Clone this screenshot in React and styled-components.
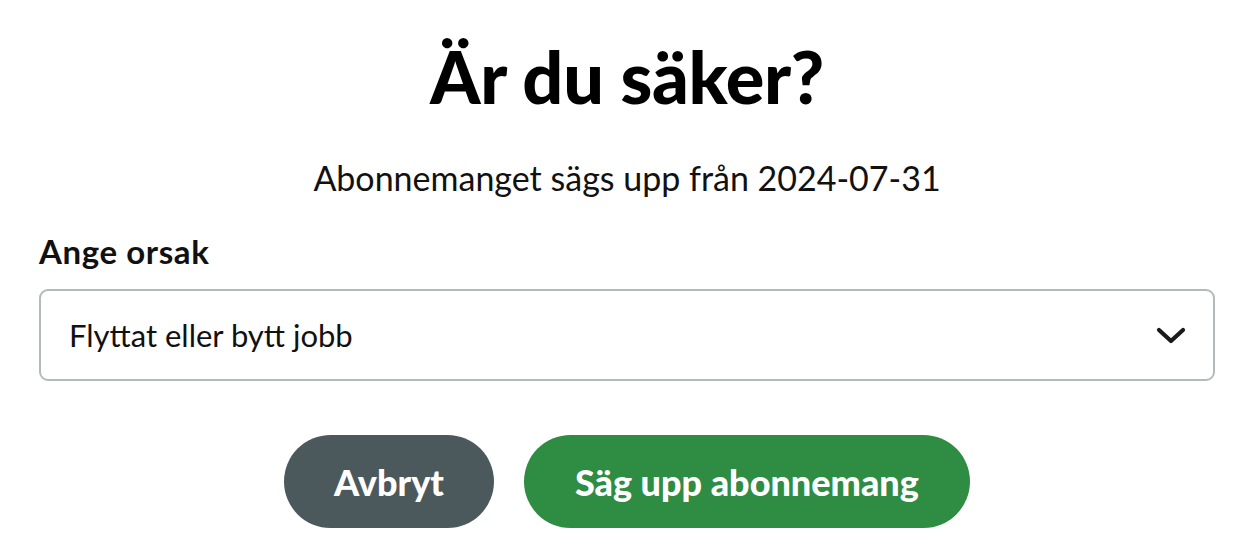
import React from 'react';
import styled, { createGlobalStyle } from 'styled-components';

const GlobalStyle = createGlobalStyle`
    html, body {
        margin: 0;
        padding: 0;
        background: #ffffff;
    }
    body {
        font-family: 'Lato', 'Liberation Sans', sans-serif;
        color: #111111;
    }
`;

const Dialog = styled.div`
    box-sizing: border-box;
    width: 1244px;
    padding: 36px 29px 0 39px;
    display: flex;
    flex-direction: column;
`;

const Title = styled.h1`
    margin: 0;
    text-align: center;
    font-size: 72px;
    font-weight: 900;
    line-height: 80px;
    letter-spacing: -0.3px;
    color: #000;
`;

const Subtitle = styled.p`
    margin: 42px 0 0;
    text-align: center;
    font-size: 34px;
    line-height: 40px;
    font-weight: 400;
`;

const Label = styled.label`
    margin-top: 33px;
    font-size: 33px;
    line-height: 40px;
    font-weight: 700;
    letter-spacing: 0.6px;
`;

const SelectBox = styled.div`
    margin-top: 18px;
    height: 92px;
    box-sizing: border-box;
    border: 2px solid #b3babd;
    border-radius: 9px;
    padding: 0 27px 0 28px;
    display: flex;
    align-items: center;
    justify-content: space-between;
    font-size: 31px;
`;

const Actions = styled.div`
    margin-top: 54px;
    display: flex;
    justify-content: center;
    gap: 30px;
`;

const Button = styled.button`
    height: 93px;
    border: none;
    border-radius: 47px;
    padding: 0 ${(p) => p.$pad}px;
    background: ${(p) => p.$bg};
    color: #fff;
    font-family: 'Lato', 'Liberation Sans', sans-serif;
    font-size: 36px;
    font-weight: 900;
    cursor: pointer;
`;

function Chevron() {
    return (
        <svg width="30" height="17" viewBox="0 0 30 17" fill="none">
            <path d="M3 3 L15 14 L27 3" stroke="#1a1a1a" strokeWidth="4.2" strokeLinecap="round" strokeLinejoin="round" />
        </svg>
    );
}

export default function App() {
    return (
        <>
            <GlobalStyle />
            <Dialog>
                <Title>Är du säker?</Title>
                <Subtitle>Abonnemanget sägs upp från 2024-07-31</Subtitle>
                <Label>Ange orsak</Label>
                <SelectBox>
                    <span>Flyttat eller bytt jobb</span>
                    <Chevron />
                </SelectBox>
                <Actions>
                    <Button $bg="#4b595d" $pad={50}>Avbryt</Button>
                    <Button $bg="#2e8c43" $pad={51}>Säg upp abonnemang</Button>
                </Actions>
            </Dialog>
        </>
    );
}
